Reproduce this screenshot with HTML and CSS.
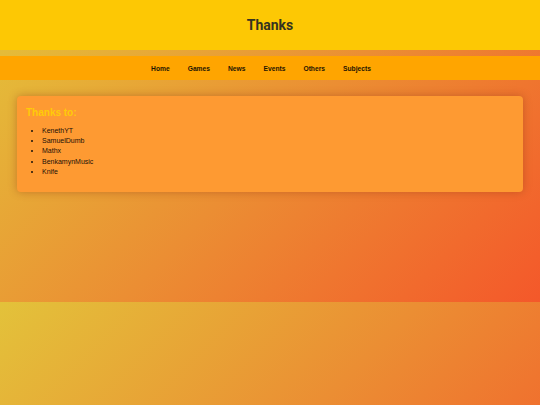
FILE: index.html
```html
<!DOCTYPE html>
<html lang="en">
<head>
<meta charset="utf-8">
<title>Thanks</title>
<link rel="stylesheet" href="styles.css">
</head>
<body>
<header class="site-header">
  <h1 class="site-title">Thanks</h1>
</header>
<nav class="site-nav">
  <a class="nav-link" href="#">Home</a>
  <a class="nav-link" href="#">Games</a>
  <a class="nav-link" href="#">News</a>
  <a class="nav-link" href="#">Events</a>
  <a class="nav-link" href="#">Others</a>
  <a class="nav-link" href="#">Subjects</a>
</nav>
<main class="content">
  <section class="card">
    <h2 class="card-title">Thanks to:</h2>
    <ul class="thanks-list">
      <li>KenethYT</li>
      <li>SamuelDumb</li>
      <li>Mathx</li>
      <li>BenkamynMusic</li>
      <li>Knife</li>
    </ul>
  </section>
</main>
</body>
</html>
```

FILE: styles.css
```css
html {
  background: linear-gradient(135deg, #e3c23a 0%, #eb8e33 50%, #f4582a 100%);
  background-size: 100% 302px;
  background-repeat: repeat;
  min-height: 100%;
}

body {
  margin: 0;
  font-family: "Liberation Sans", Arial, sans-serif;
  color: #222;
}

.site-header {
  height: 50px;
  background: #fdc804;
  display: flex;
  align-items: center;
  justify-content: center;
  margin-bottom: 6px;
}

.site-title {
  margin: 0;
  font-family: Roboto, "Liberation Sans", sans-serif;
  font-weight: 700;
  font-size: 14px;
  color: #353320;
  padding-bottom: 1px;
}

.site-nav {
  height: 24px;
  background: #ffa500;
  display: flex;
  align-items: center;
  justify-content: center;
}

.nav-link {
  font-size: 6.7px;
  font-weight: 700;
  color: #1e1400;
  text-decoration: none;
  margin-right: 18px;
}

.content {
  padding: 16px 17px;
}

.card {
  background: #fe9a32;
  border-radius: 4px;
  padding: 11px 9px 15px;
  box-shadow: 0 0 8px rgba(150, 60, 20, 0.45);
}

.card-title {
  margin: 0 0 8px;
  font-size: 10px;
  font-weight: 700;
  color: #fecb08;
}

.thanks-list {
  margin: 0;
  padding-left: 16px;
  font-size: 7px;
  line-height: 10.2px;
  color: #1a1008;
}
```
